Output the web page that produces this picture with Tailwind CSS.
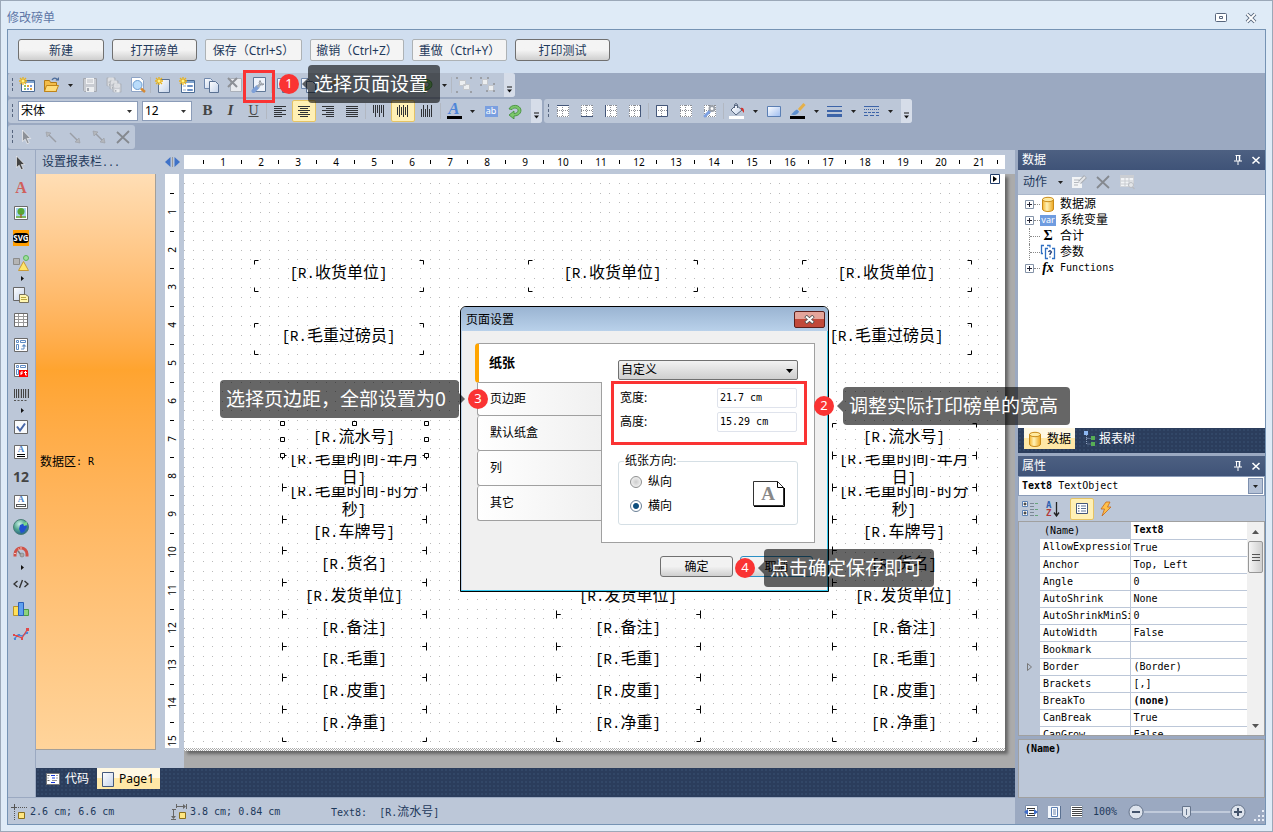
<!DOCTYPE html>
<html lang="zh-CN">
<head>
<meta charset="utf-8">
<title>修改磅单</title>
<meta name="viewport" content="width=device-width, initial-scale=1">
<script src="https://cdn.jsdelivr.net/npm/@tailwindcss/browser@4"></script>
</head>
<body class="font-['Noto_Sans','Noto_Sans_CJK_SC',sans-serif] text-xs text-[#1e395b]">

<!-- icon library -->
<svg class="absolute size-0" xmlns="http://www.w3.org/2000/svg" aria-hidden="true">
  <defs>
    <linearGradient id="gPage" x1="0" y1="0" x2="1" y2="1"><stop offset="0" stop-color="#fff"/><stop offset="1" stop-color="#c3d2ea"/></linearGradient>
    <linearGradient id="gBlue" x1="0" y1="0" x2="1" y2="1"><stop offset="0" stop-color="#fff"/><stop offset="1" stop-color="#9dbcf0"/></linearGradient>
    <linearGradient id="gGold" x1="0" y1="0" x2="1" y2="0"><stop offset="0" stop-color="#f5b32c"/><stop offset=".4" stop-color="#fff3b8"/><stop offset="1" stop-color="#eda51c"/></linearGradient>
    <radialGradient id="gGlobe" cx=".4" cy=".3" r=".8"><stop offset="0" stop-color="#c9f0e6"/><stop offset=".5" stop-color="#4fa58d"/><stop offset="1" stop-color="#1c4e8a"/></radialGradient>
  </defs>
  <symbol id="spark" viewBox="0 0 8 8"><path d="M4 0v8M0 4h8M1 1l6 6M7 1L1 7" stroke="#e8b21c" stroke-width="1.3"/><circle cx="4" cy="4" r="1.5" fill="#fff38a"/></symbol>
  <symbol id="newreport" viewBox="0 0 16 16"><path d="M2.500 3.500h13v11h-13z" fill="#fff" stroke="#4a6a94"/><path d="M3 4h12v2H3z" fill="#7fa3cf"/><path d="M5 8h2v2H5zM5 11h2v2H5z" fill="#8fc06a"/><path d="M8 8h2v2H8zM11 11h2v2h-2z" fill="#e3a43b"/><path d="M11 8h2v2h-2zM8 11h2v2H8z" fill="#7b9ede"/><use href="#spark" x="0" y="0" width="8" height="8"/></symbol>
  <symbol id="folder" viewBox="0 0 16 16"><path d="M1.500 14.500v-11h5l1 2h6v9z" fill="#f3bd4a" stroke="#b37a16"/><path d="M1.500 14.500l2-6h12l-2.500 6z" fill="#ffdc7a" stroke="#c08418"/><path d="M9 3c1.500-2.500 4-2.500 5.500 0" fill="none" stroke="#4d6d9c" stroke-width="1.300"/><path d="M12.500 3.500h3.500V0z" fill="#4d6d9c"/></symbol>
  <symbol id="save" viewBox="0 0 16 16"><path d="M1.500 1.500h13v13h-12l-1-1z" fill="#c9ccd2" stroke="#a4a8b0"/><path d="M4 1h8v6H4z" fill="#f1f2f4"/><path d="M4 10h8v5H4z" fill="#eceef0"/><path d="M5 3h6M5 5h6" stroke="#b9bcc2"/><path d="M5 11h2v3H5z" fill="#a4a8b0"/></symbol>
  <symbol id="saveall" viewBox="0 0 16 16"><use href="#save" width="10" height="10"/><use href="#save" x="3" y="3" width="10" height="10"/><use href="#save" x="6" y="6" width="10" height="10"/></symbol>
  <symbol id="preview" viewBox="0 0 16 16"><path d="M1.500.5h9l3 3v11h-12z" fill="#fff" stroke="#8ea4c6"/><circle cx="7.500" cy="8" r="4.500" fill="#b9dcfb" stroke="#6c9cd0"/><path d="M11 11.500l4 3.500" stroke="#d58a35" stroke-width="2.500"/></symbol>
  <symbol id="newpage" viewBox="0 0 16 16"><path d="M3.500 2.500h11v13h-11z" fill="url(#gPage)" stroke="#5a7192"/><use href="#spark" width="8" height="8"/></symbol>
  <symbol id="newdialog" viewBox="0 0 16 16"><path d="M2.500 3.500h13v12h-13z" fill="#fff" stroke="#4a6a94"/><path d="M3 4h12v2H3z" fill="#7fa3cf"/><path d="M4 8h3v2H4zM4 12h3v2H4z" fill="#c9d6e8"/><path d="M8.500 8.500h5v1h-5zM8.500 12.500h5v1h-5z" stroke="#6b8fc4" fill="none"/><use href="#spark" width="8" height="8"/></symbol>
  <symbol id="copypage" viewBox="0 0 16 16"><path d="M1.500 1.500h6l2 2v8h-8z" fill="url(#gPage)" stroke="#7088ad"/><path d="M6.500 4.500h6l3 3v8h-9z" fill="url(#gPage)" stroke="#5a7192"/></symbol>
  <symbol id="delpage" viewBox="0 0 16 16"><path d="M3.500 1.500h11v13h-11z" fill="#e8eaee" stroke="#aab0ba"/><path d="M1 1l9 9M10 1l-9 9" stroke="#8d9096" stroke-width="2"/></symbol>
  <symbol id="pagesetup" viewBox="0 0 16 16"><path d="M2.500.5h12v14h-12z" fill="#eef3fb" stroke="#5f7796"/><path d="M2.500 14l4-4" stroke="#7da0d8" stroke-width="4" stroke-linecap="round"/><path d="M6.500 10l3.500-3.500" stroke="#a9b0ba" stroke-width="2.500"/><path d="M9 3.500a2.500 2.500 0 1 0 4 3.500l-2 0-1-1.500z" fill="#d7dae0" stroke="#80868f" stroke-width=".8"/></symbol>
  <symbol id="brush" viewBox="0 0 16 16"><path d="M15 1l-6 6" stroke="#e0a53a" stroke-width="3"/><path d="M2 13c2-1 2-5 6-6l2 2c-1 4-4 5-8 4z" fill="#7c9fc8" stroke="#58769c" stroke-width=".7"/></symbol>
  <symbol id="group" viewBox="0 0 16 16"><path d="M3.500 3.500h6v5h-6zM7.500 7.500h6v5h-6z" fill="#eceef0" stroke="#c4c7cc"/><path d="M0 0h2v2H0zM14 0h2v2h-2zM0 14h2v2H0zM14 14h2v2h-2z" fill="#9b9fa6"/></symbol>
  <symbol id="ungroup" viewBox="0 0 16 16"><path d="M2.500 2.500h5v5h-5zM8.500 8.500h5v5h-5z" fill="#eceef0" stroke="#c4c7cc"/><path d="M0 0h2v2H0zM7 0h2v2H7zM0 7h2v2H0zM6 13h2v2H6zM13 13h2v2h-2zM13 6h2v2h-2z" fill="#9b9fa6"/></symbol>
  <symbol id="al" viewBox="0 0 16 16"><path d="M2 3.500h12M2 5.500h8M2 7.500h12M2 9.500h8M2 11.500h12M2 13.500h8" stroke="#2f3237"/></symbol>
  <symbol id="ac" viewBox="0 0 16 16"><path d="M2 3.500h12M4 5.500h8M2 7.500h12M4 9.500h8M2 11.500h12M4 13.500h8" stroke="#2f3237"/></symbol>
  <symbol id="ar" viewBox="0 0 16 16"><path d="M2 3.500h12M6 5.500h8M2 7.500h12M6 9.500h8M2 11.500h12M6 13.500h8" stroke="#2f3237"/></symbol>
  <symbol id="aj" viewBox="0 0 16 16"><path d="M2 3.500h12M2 5.500h12M2 7.500h12M2 9.500h12M2 11.500h12M2 13.500h12" stroke="#2f3237"/></symbol>
  <symbol id="vt" viewBox="0 0 16 16"><path d="M2.500 2v8M4.500 2v12M6.500 2v8M8.500 2v12M10.500 2v8M12.500 2v12" stroke="#2f3237"/></symbol>
  <symbol id="vm" viewBox="0 0 16 16"><path d="M2.500 4v8M4.500 2v12M6.500 4v8M8.500 2v12M10.500 4v8M12.500 2v12" stroke="#2f3237"/></symbol>
  <symbol id="vb" viewBox="0 0 16 16"><path d="M2.500 6v8M4.500 2v12M6.500 6v8M8.500 2v12M10.500 6v8M12.500 2v12" stroke="#2f3237"/></symbol>
  <symbol id="rot" viewBox="0 0 16 16"><path d="M2 6c2-5 11-5 12 1 0 5-5 6-7 6v3l-5-4 5-4v2.500c2 0 4-1 4-3 0-3-5-3-6-1z" fill="#7cc76b" stroke="#3d8a35" stroke-width=".8"/></symbol>
  <symbol id="grid" viewBox="0 0 16 16"><path d="M2 2h12v12H2z" fill="#fff"/><path d="M2 2.500h12M2 13.500h12M2 7.500h12M2.500 2v12M13.500 2v12M7.500 2v12" stroke="#8b8e95" stroke-dasharray="1 1"/></symbol>
  <symbol id="bt" viewBox="0 0 16 16"><use href="#grid"/><path d="M2 2.500h12" stroke="#44577a"/></symbol>
  <symbol id="bb" viewBox="0 0 16 16"><use href="#grid"/><path d="M2 13.500h12" stroke="#44577a"/></symbol>
  <symbol id="bl" viewBox="0 0 16 16"><use href="#grid"/><path d="M2.500 2v12" stroke="#44577a"/></symbol>
  <symbol id="br" viewBox="0 0 16 16"><use href="#grid"/><path d="M13.500 2v12" stroke="#44577a"/></symbol>
  <symbol id="ba" viewBox="0 0 16 16"><use href="#grid"/><path d="M2.500 2.500h11v11h-11z" fill="none" stroke="#44577a"/></symbol>
  <symbol id="be" viewBox="0 0 16 16"><use href="#grid"/><path d="M3 13l5-5" stroke="#7da0e0" stroke-width="3" stroke-linecap="round"/><circle cx="10" cy="5.500" r="2.500" fill="none" stroke="#9ba1aa" stroke-width="2"/></symbol>
  <symbol id="fill" viewBox="0 0 16 16"><path d="M0 13h15v3H0z" fill="#fff"/><path d="M7 2l6 5-6 5-5-5z" fill="url(#gPage)" stroke="#55657e"/><path d="M5.500 5V1.500q1.500-2 3 0V5" fill="none" stroke="#55657e"/><path d="M11.500 5q4-1 3.500 5l-2-2.500z" fill="#d6322b"/></symbol>
  <symbol id="rect" viewBox="0 0 16 16"><path d="M1.500 3.500h13v10h-13z" fill="url(#gBlue)" stroke="#5b7fb4"/></symbol>
  <symbol id="linecolor" viewBox="0 0 16 16"><path d="M0 13h15v3H0z" fill="#000"/><path d="M14.500 1L9 7" stroke="#e5b04a" stroke-width="3"/><path d="M1 11.500c2-1 2-3 6-5l2 2c-1 3-4 4-8 3z" fill="#5d8fce"/></symbol>
  <symbol id="lw" viewBox="0 0 16 16"><path d="M0 3.500h15" stroke="#3d64a8"/><path d="M0 8h15" stroke="#3d64a8" stroke-width="2"/><path d="M0 12.500h15" stroke="#3d64a8" stroke-width="3"/></symbol>
  <symbol id="ls" viewBox="0 0 16 16"><path d="M0 3.500h15" stroke="#3d64a8"/><path d="M0 6.500h15" stroke="#3d64a8" stroke-dasharray="1 1"/><path d="M0 9.500h15" stroke="#3d64a8" stroke-dasharray="3 1"/><path d="M0 12.500h15" stroke="#3d64a8" stroke-dasharray="4 2"/></symbol>
  <symbol id="cursor" viewBox="0 0 16 16"><path d="M3.500 1v11.500l2.700-2.300 2 4.500 2-1-2-4.200h3.500z" fill="currentColor" stroke="#fff" stroke-width=".6"/></symbol>
  <symbol id="lk1" viewBox="0 0 16 16"><path d="M5 5l8 8" stroke="#9a9ea5" stroke-width="1.500"/><path d="M3 3l5 1-4 4z" fill="#b3b6bb" stroke="#9a9ea5" stroke-width=".6"/></symbol>
  <symbol id="lk2" viewBox="0 0 16 16"><path d="M3 4l8 8" stroke="#9a9ea5" stroke-width="1.500"/><path d="M13 14l-5-1 4-4z" fill="#b3b6bb" stroke="#9a9ea5" stroke-width=".6"/></symbol>
  <symbol id="lk3" viewBox="0 0 16 16"><path d="M4 4l8 8" stroke="#9a9ea5" stroke-width="1.500"/><path d="M2 2l5 1-4 4zM14 14l-5-1 4-4z" fill="#b3b6bb" stroke="#9a9ea5" stroke-width=".6"/></symbol>
  <symbol id="xx" viewBox="0 0 16 16"><path d="M2 3l12 11M14 2L2 14" stroke="#85898f" stroke-width="1.800"/></symbol>
  <symbol id="pic" viewBox="0 0 16 16"><path d="M1.500 1.500h13v13h-13z" fill="#fff" stroke="#6a6a6a"/><path d="M3 3h10v10H3z" fill="#a6d3f3"/><path d="M3 11h10v2H3z" fill="#7cb860"/><circle cx="8" cy="6.500" r="3.500" fill="#56a634"/><path d="M8 9v4" stroke="#9a6a2d" stroke-width="1.500"/></symbol>
  <symbol id="shapes" viewBox="0 0 16 16"><path d="M.5 3.500h6v6h-6z" fill="#b5b5b5" stroke="#8b8b8b"/><circle cx="13" cy="3" r="2.500" fill="#9fdf9c" stroke="#59b35a"/><path d="M10.500 6.500l5 9h-10z" fill="#ffe66a" stroke="#c79a3a"/></symbol>
  <symbol id="sub" viewBox="0 0 16 16"><path d="M.5.5h11v13H.5z" fill="url(#gPage)" stroke="#666"/><path d="M6.500 7.500h6l3 2v6h-9z" fill="#fff6b0" stroke="#77705a"/><path d="M8 10.500h5M8 12.500h6" stroke="#b9a640"/></symbol>
  <symbol id="table" viewBox="0 0 16 16"><path d="M1.500 1.500h13v13h-13z" fill="#fff" stroke="#6a6a6a"/><path d="M2 4.500h12M2 7.500h12M2 10.500h12M5.500 2v12M10.500 2v12" stroke="#9a9a9a"/></symbol>
  <symbol id="matrix" viewBox="0 0 16 16"><path d="M1.500 1.500h13v13h-13z" fill="#fff" stroke="#6a6a6a"/><path d="M3.500 3.500h2v2h-2zM7.500 3.500h5v2h-5zM3.500 7.500h2v5h-2z" fill="none" stroke="#5f8cc4"/><path d="M8 12h3V9" fill="none" stroke="#5f8cc4"/><path d="M11 7l2.500 2.500h-5z" fill="#5f8cc4"/></symbol>
  <symbol id="barcode" viewBox="0 0 16 16"><path d="M1.500 2v9M3.500 2v9M5.500 2v9M8.500 2v9M10.500 2v9M12.500 2v9M15.500 2v9" stroke="#444"/><path d="M7 2v9M14 2v9" stroke="#777" stroke-width=".6"/><path d="M1 13.500h14" stroke="#555" stroke-dasharray="2 1.500"/></symbol>
  <symbol id="check" viewBox="0 0 16 16"><path d="M1.500 1.500h13v13h-13z" fill="#f8fafc" stroke="#666"/><path d="M4 7.500l3 4 5-7" fill="none" stroke="#4666a8" stroke-width="2"/></symbol>
  <symbol id="box" viewBox="0 0 16 16"><path d="M1.500 1.500h13v13h-13z" fill="#fff" stroke="#6a6a6a"/></symbol>
  <symbol id="globe" viewBox="0 0 16 16"><circle cx="8" cy="8" r="7.500" fill="url(#gGlobe)" stroke="#4a7d76"/><path d="M7 6l5-2 2 4-3 5-3 1-2-4z" fill="#2250d0"/><path d="M10 4l4-1 0 3-3 1z" fill="#78d98a"/></symbol>
  <symbol id="gauge" viewBox="0 0 16 16"><path d="M2 12.500V10a6 6 0 0 1 12 0v2.500" fill="none" stroke="#cf5248" stroke-width="3"/><path d="M1 9.500h2M5.500 4.500l1 2M8 3v2.500" stroke="#f5c0b8"/><path d="M5 7l4 5" stroke="#777" stroke-width="1.500"/><circle cx="9" cy="11" r="2" fill="#aaa" stroke="#777" stroke-width=".6"/></symbol>
  <symbol id="html" viewBox="0 0 16 16"><path d="M4.500 5L1 8l3.500 3M11.500 5L15 8l-3.500 3M9.500 4l-3 8" fill="none" stroke="#333" stroke-width="1.400"/></symbol>
  <symbol id="chart" viewBox="0 0 16 16"><path d="M.5 5.500h5v9h-5z" fill="#ffe05a" stroke="#b8932a"/><path d="M10.500 8.500h5v6h-5z" fill="#8ed37d" stroke="#4b9a44"/><path d="M5.500 1.500h5v13h-5z" fill="#5fa0f0" stroke="#2b5fb8"/></symbol>
  <symbol id="sparkline" viewBox="0 0 16 16"><path d="M1 13l4-4 4 1 6-4" fill="none" stroke="#4a86d8" stroke-width="1.300"/><path d="M1 9l3 1 5 2 5-8" fill="none" stroke="#e0484a" stroke-width="1.300"/><path d="M0 8h2v2H0zM3 9h2v2H3zM8 11h2v3H8zM13 2h3v3h-3z" fill="#e0484a"/><path d="M1 12h2v2H1zM5 8h2v2H5zM13 6h2v2h-2z" fill="#4a86d8"/></symbol>
  <symbol id="pin" viewBox="0 0 12 12"><path d="M3.500 1.500h5M4.500 1.500v5M2 7h8M6 7v4" stroke="#fff" fill="none"/><path d="M7.500 1v6" stroke="#fff" stroke-width="1.500"/></symbol>
  <symbol id="close" viewBox="0 0 12 12"><path d="M2.500 3l7 6.500M9.500 3l-7 6.500" stroke="currentColor" stroke-width="1.600"/></symbol>
  <symbol id="db" viewBox="0 0 16 16"><path d="M2.500 3v10c0 3.300 11 3.300 11 0V3" fill="url(#gGold)" stroke="#c98a18"/><ellipse cx="8" cy="3.500" rx="5.500" ry="2.200" fill="#ffeaa0" stroke="#c98a18"/></symbol>
  <symbol id="plus" viewBox="0 0 9 9"><path d="M.5.500h8v8h-8z" fill="#fff" stroke="#8493a8"/><path d="M2 4.500h5M4.500 2v5" stroke="#223"/></symbol>
  <symbol id="treeic" viewBox="0 0 16 16"><path d="M3.500 4v9H9M3.500 7.500H9" fill="none" stroke="#8fa3c0" stroke-dasharray="1 1"/><path d="M1 0h4v4H1z" fill="#8db8f2"/><path d="M8 5h4v4H8zM8 11h4v4H8z" fill="#57ad55"/></symbol>
  <symbol id="edit" viewBox="0 0 16 16"><path d="M1 3h10v11H1z" fill="#f2f4f6"/><path d="M3 6h5M3 8.500h6M3 11h4" stroke="#b3b7bd"/><path d="M14.500 2.500l-6 6" stroke="#a9adb4" stroke-width="4"/><path d="M14 3l-6 6" stroke="#e4e6e9" stroke-width="2"/></symbol>
  <symbol id="viewdata" viewBox="0 0 16 16"><path d="M1.500 1.500h13v11h-13z" fill="#f2f4f6" stroke="#d0d3d8"/><path d="M1 1h14v3H1z" fill="#cbced3"/><path d="M2 7h12M2 10h12M6 4v8M10 4v8" stroke="#c8cbd0"/><circle cx="12" cy="11" r="2.500" fill="#e4e6e9" stroke="#b9bcc2"/><path d="M13.500 13l2 2" stroke="#b9bcc2" stroke-width="1.500"/></symbol>
  <symbol id="cat" viewBox="0 0 16 16"><path d="M.5.500h5v5h-5zM.5 9.500h5v5h-5z" fill="#fff" stroke="#5a80b4"/><path d="M1.500 3h3M3 1.500v3M1.500 12h3M3 10.500v3" stroke="#111"/><path d="M8 2.500h4M8 5.500h4M8 8.500h4M8 11.500h4M8 14.500h4" stroke="#7b8796"/><path d="M13 2.500h3M13 8.500h3M13 14.500h3" stroke="#67a67c"/></symbol>
  <symbol id="props" viewBox="0 0 14 14"><path d="M1.500 1.500h11v10h-11z" fill="#fff" stroke="#44577a"/><path d="M3 4h1.500M3 6.500h1.500M3 9h1.500" stroke="#44577a"/><path d="M6 4h5M6 6.500h5M6 9h5" stroke="#5c7596"/></symbol>
  <symbol id="bolt" viewBox="0 0 16 16"><path d="M12 1H8L3 8h3.500L4 15l9-9H9.500z" fill="#ffc04a" stroke="#c56a1c" stroke-width=".8"/></symbol>
  <symbol id="code" viewBox="0 0 16 16"><path d="M1.500 2.500h13v11h-13z" fill="#fff" stroke="#777"/><path d="M2.500 4.500h2M2.500 7h1M2.500 9.500h2" stroke="#666"/><path d="M6 4.500h4M7 7h3M6 11.500h4" stroke="#1738d6"/><path d="M11 4.500h2M11 7h2M7 9.500h5" stroke="#999"/></symbol>
  <symbol id="pageic" viewBox="0 0 16 16"><path d="M2.500 1.500h11v14h-11z" fill="url(#gPage)" stroke="#44597c"/></symbol>
  <symbol id="pos" viewBox="0 0 16 16"><path d="M0 3.500h6M3.500 0v6" stroke="#555"/><path d="M7 3.500h9M3.500 7v9" stroke="#555" stroke-dasharray="1 1"/><path d="M7.500 8.500h6v6h-6z" fill="#ffe680" stroke="#8a6f1c"/></symbol>
  <symbol id="size" viewBox="0 0 16 16"><path d="M5.500 0v4M15.500 0v5M6 2.500h8M1 5.500h4M0 15.500h5M2.500 6v8" stroke="#666"/><path d="M12 0l3 2.500-3 2.500zM0 12h5l-2.500 3z" fill="#666"/><path d="M8.500 8.500h6v6h-6z" fill="#ffe680" stroke="#8a6f1c"/></symbol>
  <symbol id="zw" viewBox="0 0 16 16"><path d="M2.500 1.500h12v12h-12z" fill="#fff" stroke="#7b8ca8"/><path d="M4 4.500h8M4 11.500h8M6 6.500h5M6 9.500h5" stroke="#333"/><path d="M1 8l4-3v6zM15 8l-4-3v6z" fill="#3e6cc8"/></symbol>
  <symbol id="zp" viewBox="0 0 16 16"><path d="M2 2h12v12H2z" fill="#f2f6fc"/><path d="M14.500 2v12.500H2" fill="none" stroke="#5a7192"/><path d="M5.500 3.500h6v9h-6z" fill="#fff" stroke="#5a7fb4"/><path d="M7 6h3M7 8h3M7 10h3" stroke="#6b84ad"/></symbol>
  <symbol id="z1" viewBox="0 0 16 16"><path d="M1.500 1.500h12v12h-12z" fill="#fff" stroke="#8b9ab0"/><path d="M3 3.500h10M3 5.500h10M3 7.500h10M3 9.500h10M3 11.500h10" stroke="#444"/></symbol>
  <symbol id="down" viewBox="0 0 5 3"><path d="M0 0h5L2.500 3z" fill="currentColor"/></symbol>
  <symbol id="more" viewBox="0 0 7 7"><path d="M1 1h5" stroke="#111"/><path d="M1 3.500h5l-2.500 3z" fill="#111"/></symbol>
</svg>

<div class="relative flex h-screen min-h-[600px] flex-col border border-[#9ba8b8] bg-[#dfebf7]">
  <!-- title bar -->
  <header class="flex h-7 shrink-0 items-center justify-between px-[6px] pt-[5px] text-[#5e76a6]">
    <h1>修改磅单</h1>
    <div class="flex gap-[18px] pr-[9px] text-[#56657c]">
      <button aria-label="最大化"><svg class="size-3" viewBox="0 0 12 12"><rect x=".500" y="1.500" width="11" height="8" rx="1" fill="#fff" stroke="currentColor"/><path d="M4.500 4.500h3v2h-3z" fill="none" stroke="currentColor"/></svg></button>
      <button aria-label="关闭"><svg class="size-3" viewBox="0 0 12 12"><path d="M2 2l8 8M10 2l-8 8" stroke="currentColor" stroke-width="3.800"/><path d="M2 2l8 8M10 2l-8 8" stroke="#fff" stroke-width="1.800"/></svg></button>
    </div>
  </header>

  <main class="mx-[6px] mb-[6px] flex min-h-0 flex-1 flex-col border border-[#7593b4]">
    <div class="flex h-[43px] shrink-0 items-start gap-2 bg-[#d0deef] pt-[9px] pl-[10px]">
      <button class="h-[22px] w-[86px] rounded-[3px] border border-[#707070] bg-linear-to-b from-[#f4f4f4] from-50% to-[#cfcfcf] pt-px">新建</button>
      <button class="h-[22px] w-[85px] rounded-[3px] border border-[#707070] bg-linear-to-b from-[#f4f4f4] from-50% to-[#cfcfcf] pt-px">打开磅单</button>
      <button class="h-[22px] w-[97px] rounded-[2px] border border-[#adb2b5] bg-[#f4f4f4] pt-px whitespace-nowrap">保存（Ctrl+S）</button>
      <button class="h-[22px] w-[94px] rounded-[2px] border border-[#adb2b5] bg-[#f4f4f4] pt-px whitespace-nowrap">撤销（Ctrl+Z）</button>
      <button class="h-[22px] w-[95px] rounded-[2px] border border-[#adb2b5] bg-[#f4f4f4] pt-px whitespace-nowrap">重做（Ctrl+Y）</button>
      <button class="h-[22px] w-[95px] rounded-[3px] border border-[#707070] bg-linear-to-b from-[#f4f4f4] from-50% to-[#cfcfcf] pt-px">打印测试</button>
    </div>

    <!-- tool bars -->
    <div class="flex h-[77px] shrink-0 flex-col gap-[2px] bg-[#9ba9c1]">
      <div class="flex"><div class="flex h-6 items-center rounded-[3px] bg-[#bcc7d8]" data-bar="standard"></div></div>
      <div class="flex gap-[2px]">
        <div class="flex h-6 items-center rounded-[3px] bg-[#bcc7d8]">
          <span class="mx-[3px] h-4 w-[3px] bg-[radial-gradient(#56657e_1px,transparent_1px)] bg-[length:3px_5px]"></span>
          <label class="relative mr-1 ml-px flex"><span class="sr-only">字体</span>
            <select class="h-5 w-[120px] appearance-none border border-[#8b9cb8] bg-white pl-[2px] text-black"><option>宋体</option></select>
            <svg class="pointer-events-none absolute top-[9px] right-[6px] h-[3px] w-[5px] text-[#333]"><use href="#down"/></svg></label>
          <label class="relative mr-1 flex"><span class="sr-only">字号</span>
            <select class="h-5 w-[50px] appearance-none border border-[#8b9cb8] bg-white pl-[2px] text-black"><option>12</option></select>
            <svg class="pointer-events-none absolute top-[9px] right-[6px] h-[3px] w-[5px] text-[#333]"><use href="#down"/></svg></label>
          <button class="w-[23px] font-['Liberation_Serif'] text-[15px] font-bold text-[#444]">B</button>
          <button class="w-[23px] font-['Liberation_Serif'] text-[15px] font-bold text-[#444] italic">I</button>
          <button class="w-[23px] font-['Liberation_Serif'] text-[14px] text-[#444] underline">U</button>
          <div class="flex h-6 items-center" data-bar="text"></div>
        </div>
        <div class="flex h-6 items-center rounded-[3px] bg-[#bcc7d8]" data-bar="border"></div>
      </div>
      <div class="flex"><div class="flex h-6 items-center rounded-[3px] bg-[#bcc7d8] text-[#8d9198]" data-bar="link"></div></div>
    </div>

    <div class="flex min-h-0 flex-1 gap-[3px] bg-[#9ba9c1]">
      <div class="flex min-w-0 flex-1 flex-col">
        <div class="flex min-h-0 flex-1 border-b border-[#9ba9c1] bg-[#bcc7d8]">
          <!-- object rail -->
          <nav class="flex w-7 shrink-0 flex-col items-center overflow-hidden border-r border-[#9ba9c1] pr-px text-[#444]" id="rail" aria-label="对象"></nav>

          <div class="flex min-w-0 flex-1 flex-col">
            <div class="flex h-6 shrink-0 items-center">
              <button class="w-[120px] pl-[6px] text-left whitespace-nowrap">设置报表栏<span class="font-['DejaVu_Sans_Mono'] text-[10px]">...</span></button>
              <div class="flex w-[28px] justify-center pl-1"><svg class="h-[10px] w-[15px]" viewBox="0 0 15 10"><path d="M5.500 0v10L0 5z" fill="#3f72c8"/><path d="M9.500 0v10L15 5z" fill="#3f72c8"/><path d="M7.500 0v10" stroke="#999"/></svg></div>
              <svg class="h-[14px] w-[821px] shrink-0 bg-white font-['Noto_Sans'] text-[10px]" id="hr"></svg>
            </div>
            <div class="flex min-h-0 flex-1">
              <div class="mb-[18px] flex w-[120px] shrink-0 items-center border-r border-b border-[#a39f99] bg-linear-to-b from-[#ffdeb5] via-[#ffa42f] via-34% to-[#ffd49b] pl-1 text-black">数据区<span class="font-['DejaVu_Sans_Mono'] text-[10px] whitespace-pre">: R</span></div>
              <div class="w-[28px] shrink-0 pl-[9px]"><svg class="h-[574px] w-[14px] bg-white font-['Noto_Sans'] text-[10px]" id="vr"></svg></div>
              <!-- report canvas -->
              <div class="relative min-w-0 flex-1 overflow-hidden bg-[#ababab]">
                <div class="relative h-[577px] w-[821px] overflow-hidden bg-white shadow-[3px_3px_3px_#666]" id="page">
                  <svg class="absolute inset-0 size-full" id="marks"></svg>
                </div>
              </div>
            </div>
            <div class="flex h-[29px] shrink-0 items-start bg-[#2b3d5c] bg-[radial-gradient(#324767_1px,transparent_1px)] bg-[length:4px_4px] pl-[2px] text-white">
              <button class="flex h-[21px] w-[59px] items-center gap-1 pl-[7px]"><svg class="size-4"><use href="#code"/></svg>代码</button>
              <button class="flex h-[21px] w-[63px] items-center gap-[3px] bg-linear-to-b from-[#fff8e2] from-50% to-[#ffe8a6] to-50% pl-[3px] text-black"><svg class="size-4"><use href="#pageic"/></svg>Page1</button>
            </div>
          </div>
        </div>
        <footer class="flex h-[26px] shrink-0 items-center bg-[#bcc7d8] pt-[2px] pl-[3px] font-['DejaVu_Sans_Mono','Noto_Sans_CJK_SC',monospace] text-[10px] whitespace-pre">
          <div class="flex w-[160px] items-center gap-[3px]"><svg class="size-4"><use href="#pos"/></svg>2.6 cm; 6.6 cm</div>
          <div class="flex w-[160px] items-center gap-[3px]"><svg class="size-4"><use href="#size"/></svg>3.8 cm; 0.84 cm</div>
          <div>Text8:  [R.<span class="text-xs">流水号</span>]</div>
        </footer>
      </div>

      <!-- right dock -->
      <aside class="flex w-[247px] shrink-0 flex-col">
        <section class="flex min-h-[120px] flex-1 flex-col">
          <div class="flex h-5 items-center gap-[6px] bg-linear-to-b from-[#4d6082] to-[#3f5378] pr-[3px] pl-[4px] text-white"><h2 class="flex-1">数据</h2>
            <button aria-label="固定"><svg class="size-3"><use href="#pin"/></svg></button><button aria-label="关闭"><svg class="size-3"><use href="#close"/></svg></button></div>
          <div class="flex h-[25px] items-center border-b border-[#a9b6ca] bg-[#bcc7d8] pl-[5px]">
            <button class="flex w-[48px] items-center gap-[11px]">动作<svg class="h-[3px] w-[5px] text-[#222]"><use href="#down"/></svg></button>
            <button class="w-6" aria-label="编辑"><svg class="size-4"><use href="#edit"/></svg></button>
            <button class="w-6" aria-label="删除"><svg class="size-4"><use href="#xx"/></svg></button>
            <button class="w-6" aria-label="查看数据"><svg class="size-4"><use href="#viewdata"/></svg></button>
          </div>
          <ul class="flex-1 bg-white pt-px text-black">
            <li class="flex h-4 items-center pl-[7px]"><svg class="size-[9px]"><use href="#plus"/></svg><span class="w-[6px] border-t border-dotted border-[#888]"></span><svg class="size-4"><use href="#db"/></svg><span class="pl-1">数据源</span></li>
            <li class="flex h-4 items-center pl-[7px]"><svg class="size-[9px]"><use href="#plus"/></svg><span class="w-[6px] border-t border-dotted border-[#888]"></span><span class="flex h-[11px] w-4 items-center justify-center bg-[#6f9ce0] text-[9px] text-white">var</span><span class="pl-1">系统变量</span></li>
            <li class="flex h-4 items-center pl-[11px]"><span class="h-4 border-l border-dotted border-[#888]"></span><span class="w-[10px] border-t border-dotted border-[#888]"></span><span class="w-4 text-center font-['Liberation_Serif'] text-[14px] font-bold">Σ</span><span class="pl-1">合计</span></li>
            <li class="flex h-4 items-center pl-[11px]"><span class="h-4 border-l border-dotted border-[#888]"></span><span class="w-[10px] border-t border-dotted border-[#888]"></span><svg class="size-4" viewBox="0 0 16 16"><path d="M4 1.500H1.500v8H3M8 4.500H5.500v10H8M12 4.500h2.500v10H12M7 1.500h3v2" fill="none" stroke="#2f6fc2" stroke-width="1.300"/><path d="M8.500 8q1.500-2.500 3 0l-1.500 2v1M10 12.500v1" fill="none" stroke="#23407c" stroke-width="1.300"/></svg><span class="pl-1">参数</span></li>
            <li class="flex h-4 items-center pl-[7px]"><svg class="size-[9px]"><use href="#plus"/></svg><span class="w-[6px] border-t border-dotted border-[#888]"></span><span class="w-4 text-center font-['Liberation_Serif'] text-[14px] font-bold italic">fx</span><span class="pl-1 font-['DejaVu_Sans_Mono'] text-[10px]">Functions</span></li>
          </ul>
          <div class="mb-[3px] flex h-[25px] items-start bg-[#2b3d5c] bg-[radial-gradient(#324767_1px,transparent_1px)] bg-[length:4px_4px] pl-[6px] text-white">
            <button class="flex h-[21px] w-[51px] items-center gap-1 bg-linear-to-b from-[#fff8e2] from-50% to-[#ffe8a6] to-50% pl-[3px] text-black"><svg class="size-4"><use href="#db"/></svg>数据</button>
            <button class="flex h-[21px] items-center pl-2"><svg class="size-4"><use href="#treeic"/></svg>报表树</button>
          </div>
        </section>

        <section class="flex h-[342px] shrink-0 flex-col font-['DejaVu_Sans_Mono','Noto_Sans_CJK_SC',monospace] text-[10px] text-black">
          <div class="flex h-5 shrink-0 items-center gap-[6px] bg-linear-to-b from-[#4d6082] to-[#3f5378] pr-[3px] pl-[4px] text-white"><h2 class="flex-1 text-xs">属性</h2>
            <button aria-label="固定"><svg class="size-3"><use href="#pin"/></svg></button><button aria-label="关闭"><svg class="size-3"><use href="#close"/></svg></button></div>
          <button class="flex h-5 shrink-0 items-center border border-[#8b9cb8] bg-white pr-px pl-[3px] text-left"><span class="flex-1"><b>Text8</b> TextObject</span><span class="flex h-4 w-[15px] items-center justify-center border border-[#7d8fae] bg-[#b4c1d6]"><svg class="h-[3px] w-[5px] text-[#222]"><use href="#down"/></svg></span></button>
          <div class="flex h-[25px] shrink-0 items-center bg-[#bcc7d8] pl-1">
            <button class="w-6" aria-label="分类"><svg class="size-4"><use href="#cat"/></svg></button>
            <button class="flex w-6 items-center" aria-label="排序"><span class="text-[9px] leading-[8px] font-bold"><span class="block text-[#2f5fb0]">A</span><span class="block text-[#b33a3a]">Z</span></span><svg class="ml-px h-4 w-2" viewBox="0 0 8 16"><path d="M4.500 1v13M2 11.500L4.500 15 7 11.500" fill="none" stroke="#222" stroke-width="1.300"/></svg></button>
            <button class="flex h-[22px] w-6 items-center justify-center rounded-[2px] border border-[#e5c365] bg-[#fff0b5]" aria-label="属性"><svg class="size-[14px]"><use href="#props"/></svg></button>
            <button class="flex w-6 justify-center" aria-label="事件"><svg class="size-4"><use href="#bolt"/></svg></button>
          </div>
          <div class="flex min-h-0 flex-1 border border-[#a0a0a0] bg-[#bcc7d8]">
            <div class="min-w-0 flex-1 overflow-hidden">
              <table class="w-full table-fixed border-collapse"><colgroup><col class="w-[21px]"><col class="w-[90px]"><col></colgroup><tbody id="props-body"></tbody></table>
            </div>
            <div class="flex w-[17px] shrink-0 flex-col items-center bg-[#f0f0f0] pt-2">
              <svg class="h-1 w-[7px]" viewBox="0 0 7 4"><path d="M0 4h7L3.500 0z" fill="#555"/></svg>
              <div class="mt-[7px] flex h-8 w-[15px] flex-col items-center justify-center gap-[2px] rounded-[2px] border border-[#979797] bg-linear-to-r from-[#f5f5f5] to-[#cfcfcf]"><i class="h-px w-2 bg-[#555]"></i><i class="h-px w-2 bg-[#555]"></i><i class="h-px w-2 bg-[#555]"></i></div>
              <svg class="mt-auto mb-[7px] h-1 w-[7px]" viewBox="0 0 7 4"><path d="M0 0h7L3.500 4z" fill="#555"/></svg>
            </div>
          </div>
          <div class="mt-[3px] h-[59px] shrink-0 border border-[#a0a0a0] bg-[#bcc7d8] px-[6px] pt-[2px] font-bold">(Name)</div>
        </section>

        <div class="flex h-[26px] shrink-0 items-center pt-[2px] pl-[5px]">
          <button class="w-[23px]" aria-label="适合宽度"><svg class="size-4"><use href="#zw"/></svg></button>
          <button class="w-[23px]" aria-label="整页"><svg class="size-4"><use href="#zp"/></svg></button>
          <button class="w-[24px]" aria-label="实际大小"><svg class="size-4"><use href="#z1"/></svg></button>
          <span class="w-[35px] font-['DejaVu_Sans_Mono'] text-[10px]">100%</span>
          <svg class="h-[18px] w-[120px]" viewBox="0 0 120 18" role="img" aria-label="缩放"><path d="M16 9h88" stroke="#e6ecf5"/><circle cx="8" cy="9" r="7" fill="#dde3ec" stroke="#66758c"/><circle cx="110" cy="9" r="7" fill="#dde3ec" stroke="#66758c"/><path d="M4 9h8M106 9h8M110 5v8" stroke="#44546c" stroke-width="2"/><path d="M54.500 3.500h8v9l-4 3-4-3z" fill="#dde3ec" stroke="#66758c"/><path d="M58.500 6v6" stroke="#66758c"/></svg>
          <svg class="mt-2 ml-auto size-3" viewBox="0 0 12 12"><path d="M9 0h2v2H9zM5 5h2v2H5zM9 5h2v2H9zM1 9h2v2H1zM5 9h2v2H5zM9 9h2v2H9z" fill="#e8eef7"/></svg>
        </div>
      </aside>
    </div>
  </main>

  <!-- page setup dialog -->
  <form class="absolute top-[305px] left-[459px] w-[369px] rounded-t-[6px] border border-black bg-[#f0f0f0] text-black shadow-[inset_-1px_-1px_0_#35c8ee,inset_1px_0_0_#b9d1ea]" role="dialog" aria-label="页面设置">
    <div class="flex h-6 items-center justify-between rounded-t-[5px] bg-linear-to-b from-[#9ab4d2] to-[#b9d1ea] pt-px pr-[3px] pl-[5px]">页面设置
      <button type="button" aria-label="关闭" class="flex h-[17px] w-[31px] items-center justify-center rounded-[2px] border border-[#5c1f1b] bg-linear-to-b from-[#e4a59b] from-45% to-[#c1493a] to-50%"><svg class="h-[9px] w-[11px]" viewBox="0 0 11 9"><path d="M1.500 1l8 7M9.500 1l-8 7" stroke="#555" stroke-width="3.600"/><path d="M2 1.500l7 6M9 1.500l-7 6" stroke="#fff" stroke-width="2"/></svg></button>
    </div>
    <div class="flex pt-3 pr-[13px] pl-[14px]">
      <div class="z-10 flex w-[126px] shrink-0 flex-col" role="tablist">
        <button type="button" class="-mr-px h-10 rounded-l-[4px] border border-r-0 border-l-4 border-[#a0a0a0] border-l-[#ffa500] bg-white pl-[10px] text-left text-[13px] font-bold">纸张</button>
        <button type="button" class="ml-[2px] h-[33px] rounded-bl-[3px] border-b border-l border-[#a0a0a0] bg-linear-to-r from-white to-[#f0f0f0] pl-3 text-left">页边距</button>
        <button type="button" class="ml-[2px] h-[35px] rounded-l-[3px] border-b border-l border-[#a0a0a0] bg-linear-to-r from-white to-[#f0f0f0] pl-3 text-left">默认纸盒</button>
        <button type="button" class="ml-[2px] h-[35px] rounded-l-[3px] border-b border-l border-[#a0a0a0] bg-linear-to-r from-white to-[#f0f0f0] pl-3 text-left">列</button>
        <button type="button" class="ml-[2px] h-[35px] rounded-l-[3px] border-b border-l border-[#a0a0a0] bg-linear-to-r from-white to-[#f0f0f0] pl-3 text-left">其它</button>
      </div>
      <div class="h-[200px] min-w-0 flex-1 border border-[#a0a0a0] bg-white px-4 pt-4">
        <label class="relative flex"><span class="sr-only">纸张</span><select class="h-5 w-full appearance-none rounded-[2px] border border-[#707070] bg-linear-to-b from-[#f2f2f2] to-[#cfcfcf] pl-[2px]"><option>自定义</option></select><svg class="pointer-events-none absolute top-[9px] right-[5px] h-1 w-[7px]" viewBox="0 0 7 4"><path d="M0 0h7L3.500 4z"/></svg></label>
        <div class="-mr-[9px] -ml-[7px] mt-px flex flex-col gap-1 border-3 border-[#fa3333] pt-1 pr-[7px] pb-[10px] pl-[6px]">
          <div class="flex h-5 items-center justify-between"><label for="pw">宽度:</label><input id="pw" value="21.7 cm" class="h-5 w-20 rounded-[2px] border border-[#dfe3ec] pb-px pl-[2px] font-['DejaVu_Sans_Mono'] text-[10px]"></div>
          <div class="flex h-5 items-center justify-between"><label for="ph">高度:</label><input id="ph" value="15.29 cm" class="h-5 w-20 rounded-[2px] border border-[#dfe3ec] pb-px pl-[2px] font-['DejaVu_Sans_Mono'] text-[10px]"></div>
        </div>
        <fieldset class="relative mt-2 rounded-[3px] border border-[#d5dfe5] pt-px pr-[12px] pb-[6px] pl-[11px]">
          <legend class="-ml-[6px] h-4 px-px leading-4">纸张方向:</legend>
          <div class="flex items-center justify-between">
            <div>
              <label class="flex h-6 items-center gap-[6px]"><input type="radio" name="o" class="size-3 appearance-none rounded-full border border-[#8e8f8f] bg-radial from-[#ccc] to-white">纵向</label>
              <label class="flex h-6 items-center gap-[6px]"><input type="radio" name="o" checked class="size-3 appearance-none rounded-full border border-[#6a7f96] checked:bg-radial checked:from-[#0d4f7e] checked:from-35% checked:to-white checked:to-50%">横向</label>
            </div>
            <svg class="h-[26px] w-8" viewBox="0 0 32 26"><path d="M.5.500h24l6 6v18H.5z" fill="#fff" stroke="#333"/><path d="M24.500.5v6h6M1 25.500h30.500V7" fill="none" stroke="#000"/><text x="15" y="19" text-anchor="middle" class="fill-[#888] font-['Liberation_Serif'] text-[19px] font-bold">A</text></svg>
          </div>
        </fieldset>
      </div>
    </div>
    <div class="flex justify-end gap-[7px] pt-[13px] pr-[15px] pb-[14px]">
      <button type="button" class="h-[21px] w-[73px] rounded-[3px] border border-[#707070] bg-linear-to-b from-[#f2f2f2] from-50% to-[#cfcfcf]">确定</button>
      <button type="button" class="h-[21px] w-[73px] rounded-[3px] border border-[#2c8fc4] bg-linear-to-b from-[#f2f2f2] from-50% to-[#cfcfcf]">取消</button>
    </div>
  </form>

  <!-- guide call-outs -->
  <div class="absolute top-[69px] left-[242px] h-[33px] w-8 border-3 border-[#fa3333]"></div>
  <div class="absolute top-[64px] left-[278px] z-20 flex h-[38px] items-center text-[19px] whitespace-nowrap text-white">
    <b class="flex size-5 items-center justify-center rounded-full bg-[#fa3333] text-[13px] font-normal">1</b>
    <i class="ml-[3px] h-0 w-0 border-y-6 border-r-6 border-y-transparent border-r-black/60"></i><p class="flex h-[38px] items-center rounded-[4px] bg-black/60 pt-[2px] pr-3 pl-[6px]">选择页面设置</p>
  </div>
  <div class="absolute top-[386px] left-[813px] z-20 flex h-[38px] items-center text-[19px] whitespace-nowrap text-white">
    <b class="flex size-5 items-center justify-center rounded-full bg-[#fa3333] text-[13px] font-normal">2</b>
    <i class="ml-[3px] h-0 w-0 border-y-6 border-r-6 border-y-transparent border-r-black/60"></i><p class="flex h-[38px] items-center rounded-[4px] bg-black/60 pt-[2px] pr-3 pl-[6px]">调整实际打印磅单的宽高</p>
  </div>
  <div class="absolute top-[379px] left-[219px] z-20 flex h-[38px] items-center text-[19px] whitespace-nowrap text-white">
    <p class="flex h-[38px] w-[239px] items-center rounded-[4px] bg-black/60 pt-[2px] pl-[6px]">选择页边距，全部设置为0</p><i class="mr-[3px] h-0 w-0 border-y-6 border-l-6 border-y-transparent border-l-black/60"></i>
    <b class="flex size-5 items-center justify-center rounded-full bg-[#fa3333] text-[13px] font-normal">3</b>
  </div>
  <div class="absolute top-[548px] left-[734px] z-20 flex h-[38px] items-center text-[19px] whitespace-nowrap text-white">
    <b class="flex size-5 items-center justify-center rounded-full bg-[#fa3333] text-[13px] font-normal">4</b>
    <i class="ml-[3px] h-0 w-0 border-y-6 border-r-6 border-y-transparent border-r-black/60"></i><p class="flex h-[38px] items-center rounded-[4px] bg-black/60 pt-[2px] pr-3 pl-[6px]">点击确定保存即可</p>
  </div>
</div>

<script>
  // Tool bars: "|" and "s" separators, "v" and "V" drop-down arrows, ":" grip, ">" overflow, "*name" pressed, "_" gap
  const bars = {
    standard: ': newreport folder V save saveall preview | newpage newdialog copypage delpage pagesetup | copypage copypage brush _ _ rot v | group ungroup >',
    text: 's al *ac ar aj s vt *vm vb s A v ab rot >',
    border: ': bt bb bl br s ba grid be s fill v rect linecolor v lw v ls v >',
    link: ': cursor lk1 lk2 lk3 xx'
  };
  const special = {
    '|': '<span class="h-4 w-px bg-[#b2b8c2]"></span>',
    's': '<span class="mx-px h-4 w-px bg-[#b2b8c2]"></span>',
    'v': '<span class="flex w-[13px] justify-center"><svg class="h-[3px] w-[5px] text-[#222]"><use href="#down"/></svg></span>',
    'V': '<span class="flex w-[15px] justify-center"><svg class="h-[3px] w-[5px] text-[#222]"><use href="#down"/></svg></span>',
    ':': '<span class="mr-px ml-[3px] h-4 w-[3px] bg-[radial-gradient(#56657e_1px,transparent_1px)] bg-[length:3px_5px]"></span>',
    '>': '<button aria-label="更多" class="ml-[4px] flex h-6 w-[11px] items-end justify-center rounded-r-[3px] bg-[#d6dde9] pb-1"><svg class="size-[7px]"><use href="#more"/></svg></button>',
    '_': '<span class="w-[35px]"></span>',
    'A': `<button class="flex h-6 w-6 flex-col items-center justify-center font-['Liberation_Serif'] text-[17px] leading-[12px] font-bold text-[#4f86d8] italic">A<span class="mt-px h-[3px] w-[15px] bg-black"></span></button>`,
    'ab': '<button class="flex h-6 w-6 items-center justify-center"><span class="h-[11px] w-[13px] bg-[#7a9fe0] text-center text-[9px] leading-[10px] text-white">ab</span></button>'
  };
  document.querySelectorAll('[data-bar]').forEach(el => {
    el.innerHTML = bars[el.dataset.bar].split(' ').map(k => {
      if (special[k]) return special[k];
      const on = k[0] === '*', n = on ? k.slice(1) : k;
      return `<button aria-label="${n}" class="${on ? 'flex h-[22px] w-6 items-center justify-center rounded-[2px] border border-[#e5c365] bg-[#fff0b5]' : 'flex h-6 w-6 items-center justify-center'}"><svg class="size-4 shrink-0"><use href="#${n}"/></svg></button>`;
    }).join('');
  });

  // Object rail
  const letter = (t) => `<span class="relative flex"><svg class="size-4"><use href="#box"/></svg>${t}</span>`;
  const rail = ['cursor',
    `<span class="font-['Liberation_Serif'] text-[16px] font-bold text-[#d0605c]">A</span>`, 'pic',
    '<span class="flex size-4 items-center justify-center bg-[#ff9d00]"><span class="w-4 rounded-[4px] bg-black text-center text-[8px] leading-[10px] font-bold text-white">SVG</span></span>',
    'shapes', '>', 'sub', 'table', 'matrix',
    letter('<svg class="absolute inset-0 size-4" viewBox="0 0 16 16"><path d="M3.500 3.500h2v2h-2zM7.500 3.500h5v2h-5zM3.500 7.500h2v5h-2z" fill="none" stroke="#5f8cc4"/><path d="M6 8h9v7H6z" fill="#f00"/><path d="M8 13v-3h2M8 11.500h1.500M12.500 9v4h1.500M11 10.500h3" stroke="#fff" fill="none"/></svg>'),
    'barcode', '>', 'check',
    letter(`<span class="absolute inset-x-0 top-0 text-center font-['Liberation_Serif'] text-[9px] leading-[10px] font-bold text-[#4f86c8]">A</span><span class="absolute top-[10px] left-[4px] h-[3px] w-2 border-y border-black"></span>`),
    '<span class="text-[14px] leading-4 font-bold">12</span>',
    letter(`<span class="absolute inset-x-0 top-0 text-center font-['Liberation_Serif'] text-[9px] leading-[10px] font-bold text-[#4f86c8]">A</span><span class="absolute top-[10px] left-[3px] h-[3px] w-[10px] border border-[#555]"></span>`),
    'globe', 'gauge', '>', 'html', 'chart', 'sparkline'];
  document.getElementById('rail').innerHTML = rail.map(k => k === '>'
    ? '<span class="flex h-[7px] w-full items-center justify-center pl-[3px]"><svg class="h-[5px] w-[3px]" viewBox="0 0 3 5"><path d="M0 0v5l3-2.500z" fill="#111"/></svg></span>'
    : `<button class="flex h-[25px] w-full shrink-0 items-center justify-center">${k[0] === '<' ? k : `<svg class="size-4"><use href="#${k}"/></svg>`}</button>`).join('');

  // Rulers and grid: 96 dpi
  const CM = 96 / 2.54, r = Math.round;
  let h = '', v = '';
  for (let i = 0; i < 22; i++) {
    const t = r((i + .5) * CM);
    h += `<path d="M${t + .5} 5v4" stroke="#000"/>`;
    if (i) h += `<text x="${r(i * CM) + 1}" y="11" text-anchor="middle">${i}</text>`;
    if (i < 15) v += `<path d="M5 ${t + .5}h4" stroke="#000"/>`;
    if (i && i < 16) v += `<text transform="translate(11 ${r(i * CM)}) rotate(-90)" text-anchor="middle">${i}</text>`;
  }
  document.getElementById('hr').innerHTML = h;
  document.getElementById('vr').innerHTML = v;

  let dots = '';
  for (let y = 1; y < 61; y++) for (let x = 0; x < 87; x++) dots += `M${r(x * CM / 4)} ${r(y * CM / 4)}h1v1h-1z`;

  // Report fields
  const cells = [];
  [70, 344, 618].forEach(x => cells.push([x, 86, 169, 31, '[R.收货单位]'], [x, 149, 169, 31, '[R.毛重过磅员]']));
  const ys = [249, 281, 313, 345, 376, 408, 440, 472, 503, 535, 567];
  const names = ['[R.流水号]', '[R.毛重时间-年月|日]', '[R.毛重时间-时分|秒]', '[R.车牌号]', '[R.货名]', '[R.发货单位]', '[R.备注]', '[R.毛重]', '[R.皮重]', '[R.净重]'];
  [98, 372, 648].forEach(x => names.forEach((n, i) => cells.push([x, ys[i], 144, ys[i + 1] - ys[i], n])));
  let marks = '', html = '';
  cells.forEach(([x, y, w, hh, n]) => {
    const a = x + .5, b = y + .5, c = a + w, d = b + hh;
    if (!(x === 98 && y === 249)) marks += `M${a} ${b + 4}V${b}h4M${c - 4} ${b}h4v4M${a} ${d - 4}v4h4M${c - 4} ${d}h4v-4`;
    const txt = n.replace('|', '<br>').replace(/[\[\]R.\-]+/g, m => `<span class="font-['Liberation_Mono'] text-[14px]">${m}</span>`);
    html += `<div class="absolute flex items-center justify-center overflow-hidden pb-1 text-center text-[16px] leading-[17px] whitespace-nowrap text-black" style="left:${x}px;top:${y}px;width:${w}px;height:${hh}px"><span>${txt}</span></div>`;
  });
  let handles = '';
  [[98, 249], [170, 249], [242, 249], [98, 265], [242, 265], [98, 281], [170, 281], [242, 281]].forEach(([x, y]) => handles += `M${x - 1.5} ${y - 1.5}h4v4h-4z`);
  document.getElementById('marks').innerHTML =
    `<defs><pattern id="hatch" width="2" height="2" patternUnits="userSpaceOnUse"><path d="M0 0h1v1H0zM1 1h1v1H1z" fill="#aaa"/></pattern></defs>` +
    `<path d="${dots}" fill="#b9b9b9"/><path d="${marks}" fill="none" stroke="#000"/>` +
    `<rect x="0" y="574" width="821" height="3" fill="url(#hatch)"/>` +
    `<path d="M806.500.500h9v9h-9z" fill="#fff" stroke="#1f3a66"/><path d="M809 2v6l4-3z"/>`;
  document.getElementById('page').insertAdjacentHTML('beforeend', html + `<svg class="absolute inset-0 size-full"><path d="${handles}" fill="#fff" stroke="#000"/></svg>`);

  // Property grid
  const props = [['(Name)', '<b>Text8</b>'], ['AllowExpressions', 'True'], ['Anchor', 'Top, Left'], ['Angle', '0'], ['AutoShrink', 'None'], ['AutoShrinkMinSize', '0'], ['AutoWidth', 'False'], ['Bookmark', ''], ['Border', '(Border)'], ['Brackets', '[,]'], ['BreakTo', '<b>(none)</b>'], ['CanBreak', 'True'], ['CanGrow', 'False']];
  document.getElementById('props-body').innerHTML = props.map(([k, val], i) => `<tr class="h-[17px]"><td class="p-0">${k === 'Border' ? '<svg class="mx-auto h-2 w-[5px]" viewBox="0 0 5 8"><path d="M.5.500v7L4.500 4z" fill="none" stroke="#777"/></svg>' : ''}</td><td class="${i ? 'overflow-hidden border-b border-[#bcc7d8] bg-white p-0 pl-[3px] leading-4 whitespace-nowrap' : 'p-0 pl-1 leading-4'}">${k}</td><td class="border-b border-l border-[#bcc7d8] bg-white p-0 pl-[3px] leading-4 whitespace-nowrap">${val}</td></tr>`).join('');
</script>
</body>
</html>
